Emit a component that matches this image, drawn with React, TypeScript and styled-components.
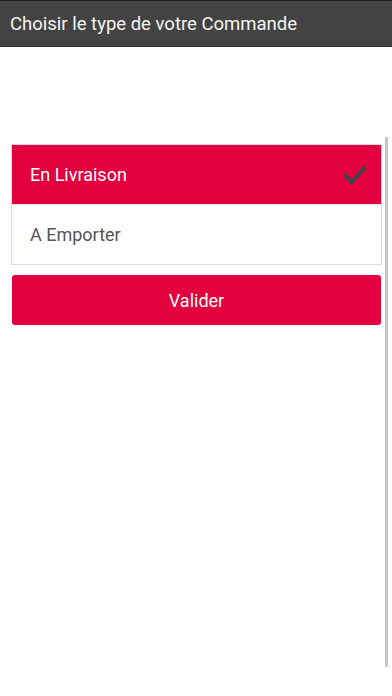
import React, { useState } from 'react';
import styled, { createGlobalStyle } from 'styled-components';

const GlobalStyle = createGlobalStyle`
  html, body {
    margin: 0;
    padding: 0;
    background: #ffffff;
    font-family: Roboto, 'Noto Sans', sans-serif;
  }
`;

const Screen = styled.div`
  position: relative;
  width: 392px;
  height: 696px;
  overflow: hidden;
  background: #ffffff;
`;

const TitleBar = styled.div`
  height: 45px;
  display: flex;
  align-items: center;
  padding: 0 10px;
  background-color: #434343;
  border-top: 1px solid #1e1e1e;
  border-bottom: 1px solid #2f2f2f;
  color: #f4f4f4;
  font-size: 18.5px;
`;

const Content = styled.div`
  display: flex;
  flex-direction: column;
  padding: 97px 11px 0 11px;
  width: 371px;
`;

const OptionList = styled.div`
  display: flex;
  flex-direction: column;
  border: 1px solid #dcdcdc;
`;

const OptionRow = styled.div<{ selected: boolean }>`
  height: 59px;
  display: flex;
  align-items: center;
  justify-content: space-between;
  padding: 0 14px 0 18px;
  font-size: 18px;
  cursor: pointer;
  background-color: ${({ selected }) => (selected ? '#e2003e' : '#ffffff')};
  color: ${({ selected }) => (selected ? '#ffffff' : '#555555')};

  & + & {
    border-top: 1px solid #e0e0e0;
  }
`;

const ValidateButton = styled.button`
  margin: 10px 0 0 1px;
  width: 369px;
  height: 50px;
  border: none;
  border-radius: 3px;
  background-color: #e2003e;
  color: #ffffff;
  font-family: Roboto, 'Noto Sans', sans-serif;
  font-size: 18px;
  cursor: pointer;
`;

const ScrollBar = styled.div`
  position: absolute;
  right: 4px;
  top: 137px;
  width: 3px;
  height: 530px;
  background-color: #c6c6c6;
`;

const CheckIcon = () => (
  <svg width='24' height='22' viewBox='0 0 24 22'>
    <path
      d='M2.5 11.5 L8.5 18.5 L21.5 3.5'
      fill='none'
      stroke='#444444'
      strokeWidth='4'
      strokeLinecap='round'
      strokeLinejoin='round'
    />
  </svg>
);

const options = ['En Livraison', 'A Emporter'];

const App: React.FC = () => {
  const [selected, setSelected] = useState<string>(options[0]);

  return (
    <Screen>
      <GlobalStyle />
      <TitleBar>Choisir le type de votre Commande</TitleBar>
      <Content>
        <OptionList>
          {options.map((option) => (
            <OptionRow
              key={option}
              selected={selected === option}
              onClick={() => setSelected(option)}
            >
              <span>{option}</span>
              {selected === option && <CheckIcon />}
            </OptionRow>
          ))}
        </OptionList>
        <ValidateButton>Valider</ValidateButton>
      </Content>
      <ScrollBar />
    </Screen>
  );
};

export default App;
